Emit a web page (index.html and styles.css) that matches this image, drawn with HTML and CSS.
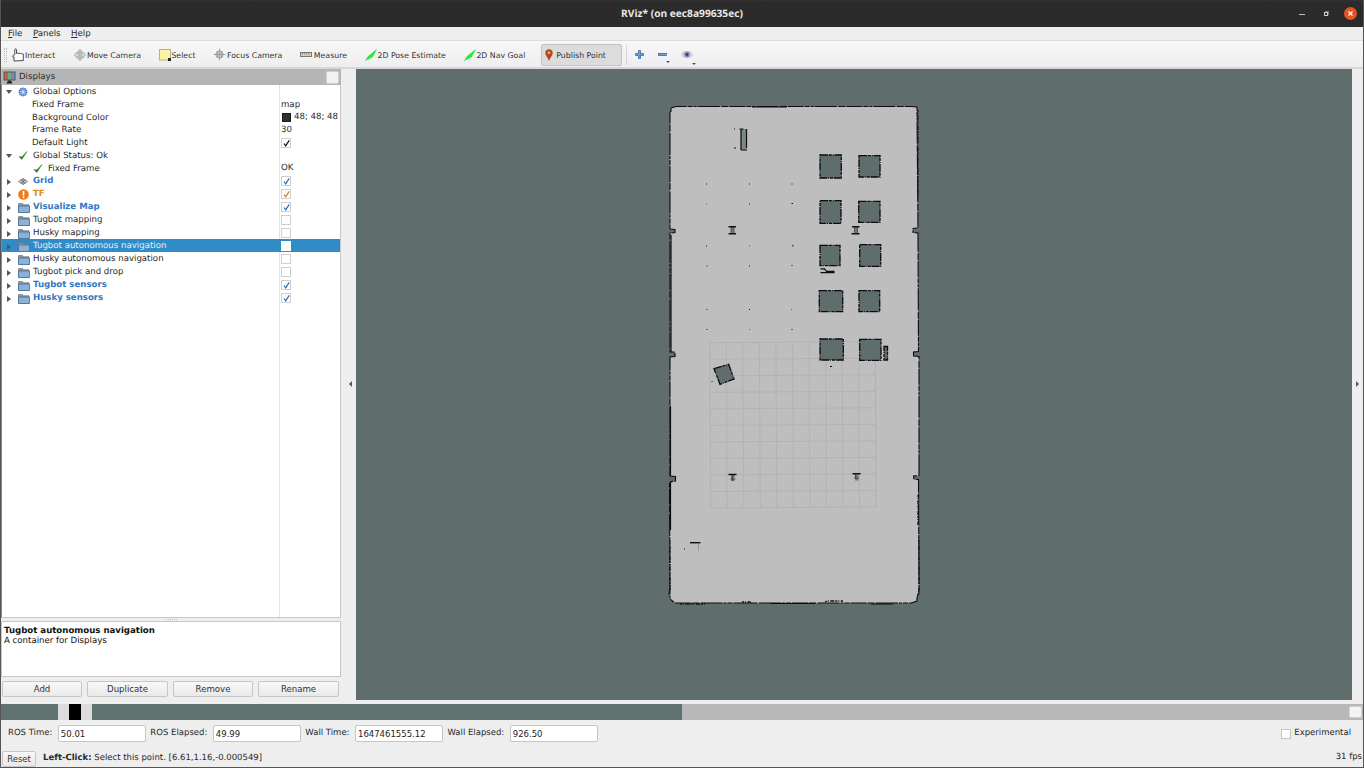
FILE: index.html
```html
<!DOCTYPE html>
<html lang="en">
<head>
<meta charset="utf-8">
<title>RViz</title>
<link rel="stylesheet" href="styles.css">
</head>
<body>
<svg class="defs" width="0" height="0" aria-hidden="true">
  <symbol id="folder" viewBox="0 0 12 11">
    <path d="M0.5 1.5h4l1 1.2h5.5v7.8h-10.500z" fill="#8f8f8f" stroke="#6f6f6f" stroke-width=".6"/>
    <path d="M0.500 4h11v6.500h-11z" fill="#8cb0d6" stroke="#3f6ea3" stroke-width=".8"/>
  </symbol>
  <symbol id="tick" viewBox="0 0 10 10">
    <path d="M1 5.500l2.800 3 5.200-8-5.200 5.500z" fill="#1f7a1f" stroke="#1f7a1f" stroke-width=".5"/>
  </symbol>
  <symbol id="checkmark" viewBox="0 0 9 9">
    <path d="M2 4.500l1.700 2.400 3.500-5.500" fill="none" stroke="currentColor" stroke-width="1.200"/>
  </symbol>
  <symbol id="arrow" viewBox="0 0 12 12">
    <path d="M.5 11.500L3 7.500 11.500.5 7.500 8z" fill="#1df51d" stroke="#22c43e" stroke-width=".4"/>
  </symbol>
  <symbol id="move" viewBox="0 0 12 12">
    <path d="M6 .3l1.800 1.900H6.800v1.600h2.200V2.900l2.700 3.100-2.700 3.100v-.9H6.800v1.600h1l-1.800 1.900-1.800-1.900h1V8.200H3v.9L.3 6 3 2.900v.9h2.200V2.200h-1z" fill="#d6d6d6" stroke="#8a8a8a" stroke-width=".6"/>
    <path d="M4 5h4M4 7h4M5 3.500v5M7 3.500v5" stroke="#9a9a9a" stroke-width=".5"/>
  </symbol>
  <symbol id="focus" viewBox="0 0 13 13">
    <circle cx="6.500" cy="6.500" r="3.700" fill="#d6d6d6" stroke="#8a8a8a" stroke-width=".7"/>
    <path d="M6.500.5v12M.5 6.500h12M4.700 3.500v6M8.300 3.500v6" stroke="#8a8a8a" stroke-width=".7"/>
  </symbol>
</svg>

<header class="titlebar">
  <span class="title">RViz* (on eec8a99635ec)</span>
  <div class="winctl">
    <span class="win-min"></span>
    <span class="win-max"></span>
    <svg class="win-close" width="13" height="13" viewBox="0 0 13 13"><circle cx="6.500" cy="6.500" r="6.500" fill="#e95420"/><path d="M4.500 4.500l4 4M8.500 4.500l-4 4" stroke="#fff" stroke-width="1.100"/></svg>
  </div>
</header>

<nav class="menubar">
  <span><u>F</u>ile</span>
  <span><u>P</u>anels</span>
  <span><u>H</u>elp</span>
</nav>

<div class="toolbar">
  <span class="grip"></span>
  <div class="tool tool-first">
    <svg width="13" height="14" viewBox="0 0 13 14"><path d="M2 13V9H.8c0-1.500.7-2.300 2-2.300V1.800c0-1.200 1.700-1.200 1.700 0v3.600l1.600-.4.400.5 1.500-.3.500.5 1.300-.2.500.5h1v6.500z" fill="#fff" stroke="#222" stroke-width=".8"/></svg>
    <span>Interact</span>
  </div>
  <div class="tool"><svg width="12" height="12"><use href="#move"/></svg><span>Move Camera</span></div>
  <div class="tool">
    <svg width="12" height="12" viewBox="0 0 12 12"><rect x=".5" y=".5" width="11" height="10.500" fill="#faf3a8" stroke="#b9b07a"/><rect x="9" y="9" width="3" height="3" fill="#222"/></svg>
    <span>Select</span>
  </div>
  <div class="tool"><svg width="13" height="13"><use href="#focus"/></svg><span>Focus Camera</span></div>
  <div class="tool tool-measure">
    <svg width="12" height="5" viewBox="0 0 12 5"><rect x=".5" y=".5" width="11" height="4" fill="#d8d2a0" stroke="#777"/><path d="M2.500 1v1.500M4.500 1v1.500M6.500 1v1.500M8.500 1v1.500" stroke="#666" stroke-width=".6"/></svg>
    <span>Measure</span>
  </div>
  <div class="tool"><svg width="12" height="12"><use href="#arrow"/></svg><span>2D Pose Estimate</span></div>
  <div class="tool"><svg width="12" height="12"><use href="#arrow"/></svg><span>2D Nav Goal</span></div>
  <div class="tool tool-active">
    <svg width="8" height="12" viewBox="0 0 8 12"><path d="M4 12C3 9 .3 6.500.3 4a3.700 3.700 0 0 1 7.400 0C7.700 6.500 5 9 4 12z" fill="#b5491f"/><circle cx="4" cy="3.800" r="1.300" fill="#f0b090"/></svg>
    <span>Publish Point</span>
  </div>
  <span class="tool-sep"></span>
  <div class="mini mini-plus">
    <svg width="9" height="9" viewBox="0 0 9 9"><path d="M3.500.5h2v3h3v2h-3v3h-2v-3h-3v-2h3z" fill="#6f9bd6" stroke="#2d5f9e" stroke-width=".7"/></svg>
  </div>
  <div class="mini mini-minus">
    <svg width="9" height="3" viewBox="0 0 9 3"><rect x=".4" y=".4" width="8.200" height="2.200" fill="#6f9bd6" stroke="#2d5f9e" stroke-width=".7"/></svg>
    <i class="drop"></i>
  </div>
  <div class="mini mini-eye">
    <svg width="12" height="9" viewBox="0 0 12 9"><ellipse cx="6" cy="4.500" rx="5.800" ry="3.800" fill="#d4d4d4"/><circle cx="6" cy="4.500" r="2.900" fill="#7f8cc0"/><circle cx="6" cy="4.500" r="1.300" fill="#2d3460"/></svg>
    <i class="drop"></i>
  </div>
</div>

<main class="main">
  <aside class="side">
    <div class="panel-head">
      <svg width="13" height="13" viewBox="0 0 13 13"><rect x=".5" y=".5" width="12" height="9" fill="#555"/><rect x="1.500" y="1.500" width="3.400" height="7" fill="#c85a5a"/><rect x="4.900" y="1.500" width="3.300" height="7" fill="#6faf6f"/><rect x="8.200" y="1.500" width="3.300" height="7" fill="#7a86c8"/><path d="M3.500 12.500h6l-1.500-3h-3z" fill="#222"/></svg>
      <span class="panel-name">Displays</span>
      <span class="panel-box"></span>
    </div>
    <div class="tree">
      <div class="row"><div class="cell lvl0"><i class="exp open"></i><svg class="ic" width="10" height="10" viewBox="0 0 10 10"><circle cx="5" cy="5" r="3.800" fill="#86a8dc" stroke="#3a6cc0" stroke-width="1.400" stroke-dasharray="1.300 .8"/><circle cx="5" cy="5" r="1.300" fill="#d5e2f5"/></svg><span>Global Options</span></div><div class="val"></div></div>
      <div class="row"><div class="cell lvl1"><span>Fixed Frame</span></div><div class="val">map</div></div>
      <div class="row"><div class="cell lvl1"><span>Background Color</span></div><div class="val"><i class="swatch"></i>48; 48; 48</div></div>
      <div class="row"><div class="cell lvl1"><span>Frame Rate</span></div><div class="val">30</div></div>
      <div class="row"><div class="cell lvl1"><span>Default Light</span></div><div class="val"><i class="cb cb-black"><svg width="9" height="9"><use href="#checkmark"/></svg></i></div></div>
      <div class="row"><div class="cell lvl0"><i class="exp open"></i><svg class="ic" width="10" height="10"><use href="#tick"/></svg><span>Global Status: Ok</span></div><div class="val"></div></div>
      <div class="row"><div class="cell lvl1b"><svg class="ic" width="10" height="10"><use href="#tick"/></svg><span>Fixed Frame</span></div><div class="val">OK</div></div>
      <div class="row"><div class="cell lvl0"><i class="exp"></i><svg class="ic" width="10" height="7" viewBox="0 0 10 7"><path d="M.5 3.500L5 .5l4.500 3L5 6.500zM5 .5v6M2.500 2l5 3M7.500 2l-5 3" fill="#ddd" stroke="#555" stroke-width=".7"/></svg><span class="on-blue">Grid</span></div><div class="val"><i class="cb cb-blue"><svg width="9" height="9"><use href="#checkmark"/></svg></i></div></div>
      <div class="row"><div class="cell lvl0"><i class="exp"></i><svg class="ic" width="11" height="11" viewBox="0 0 11 11"><circle cx="5.500" cy="5.500" r="5.300" fill="#ee7d1c"/><rect x="4.700" y="2" width="1.600" height="4.700" fill="#fff"/><rect x="4.700" y="7.500" width="1.600" height="1.600" fill="#fff"/></svg><span class="on-orange">TF</span></div><div class="val"><i class="cb cb-orange"><svg width="9" height="9"><use href="#checkmark"/></svg></i></div></div>
      <div class="row"><div class="cell lvl0"><i class="exp"></i><svg class="ic" width="12" height="11"><use href="#folder"/></svg><span class="on-blue">Visualize Map</span></div><div class="val"><i class="cb cb-blue"><svg width="9" height="9"><use href="#checkmark"/></svg></i></div></div>
      <div class="row"><div class="cell lvl0"><i class="exp"></i><svg class="ic" width="12" height="11"><use href="#folder"/></svg><span>Tugbot mapping</span></div><div class="val"><i class="cb"></i></div></div>
      <div class="row"><div class="cell lvl0"><i class="exp"></i><svg class="ic" width="12" height="11"><use href="#folder"/></svg><span>Husky mapping</span></div><div class="val"><i class="cb"></i></div></div>
      <div class="row row-sel"><div class="cell lvl0"><i class="exp"></i><svg class="ic" width="12" height="11"><use href="#folder"/></svg><span>Tugbot autonomous navigation</span></div><div class="val"><i class="cb cb-sel"></i></div></div>
      <div class="row"><div class="cell lvl0"><i class="exp"></i><svg class="ic" width="12" height="11"><use href="#folder"/></svg><span>Husky autonomous navigation</span></div><div class="val"><i class="cb"></i></div></div>
      <div class="row"><div class="cell lvl0"><i class="exp"></i><svg class="ic" width="12" height="11"><use href="#folder"/></svg><span>Tugbot pick and drop</span></div><div class="val"><i class="cb"></i></div></div>
      <div class="row"><div class="cell lvl0"><i class="exp"></i><svg class="ic" width="12" height="11"><use href="#folder"/></svg><span class="on-blue">Tugbot sensors</span></div><div class="val"><i class="cb cb-blue"><svg width="9" height="9"><use href="#checkmark"/></svg></i></div></div>
      <div class="row"><div class="cell lvl0"><i class="exp"></i><svg class="ic" width="12" height="11"><use href="#folder"/></svg><span class="on-blue">Husky sensors</span></div><div class="val"><i class="cb cb-blue"><svg width="9" height="9"><use href="#checkmark"/></svg></i></div></div>
      <div class="tree-fill"><div class="tree-line"></div></div>
    </div>
    <div class="split"><i></i></div>
    <div class="desc">
      <b>Tugbot autonomous navigation</b>
      <span>A container for Displays</span>
    </div>
    <div class="buttons">
      <button class="btn btn-add">Add</button>
      <button class="btn btn-dup">Duplicate</button>
      <button class="btn btn-rem">Remove</button>
      <button class="btn btn-ren">Rename</button>
    </div>
  </aside>
  <div class="handle"><i class="tri-left"></i></div>
  <section class="view">
    <svg class="map" viewBox="356 69 996 631" width="996" height="631">
      <polygon class="floor" points="671,108 676,106.500 912,106.500 917,107 917,111 918,228 913,228.500 913,232.500 918,233 918.500,351.500 913.500,352 913.500,356 919,356.500 919,475.500 913.500,476 914,479 918.500,479.500 919,590 917,598 917,601 911,603 675,603 670,599 669.500,482 675.500,481 675.500,476.500 670,476 670,357 675,356.500 675,352 670,352 670,233 675,232.500 675,229.500 670,229 670,112 671,111.500"/>
      <polygon class="wall" points="671,108 676,106.500 912,106.500 917,107 917,111 918,228 913,228.500 913,232.500 918,233 918.500,351.500 913.500,352 913.500,356 919,356.500 919,475.500 913.500,476 914,479 918.500,479.500 919,590 917,598 917,601 911,603 675,603 670,599 669.500,482 675.500,481 675.500,476.500 670,476 670,357 675,356.500 675,352 670,352 670,233 675,232.500 675,229.500 670,229 670,112 671,111.500"/>
      <path class="wall-solid" d="M752 107H787M670.500 406V476M670.500 482V530M671 235V352M871 604H893M770 603.500H815"/>
      <path class="wall-rough" d="M680 604h26M742 602h8l1 2M825 602l2-1h16M918 495v30M919 540v55M670 540v50M670 585l-1 10M918 110v90"/>
      <path class="grid" d="M709.700 342.700L710.700 508M726.300 342.600L727.200 507.900M742.800 342.500L743.800 507.800M759.400 342.400L760.300 507.700M775.900 342.300L776.800 507.600M792.500 342.200L793.400 507.500M809.100 342.100L809.900 507.400M825.600 342L826.400 507.300M842.200 341.900L842.900 507.200M858.700 341.800L859.500 507.100M875.300 341.700L876 507"/>
      <path class="grid" d="M709.700 342.700L875.300 341.700M709.800 359.200L875.400 358.200M709.900 375.800L875.500 374.800M710 392.300L875.600 391.300M710.100 408.800L875.700 407.800M710.200 425.400L875.700 424.400M710.300 441.900L875.800 440.900M710.400 458.400L875.900 457.400M710.500 474.900L876 473.900M710.600 491.500L876 490.500M710.700 508L876 507"/>
      <rect class="pillar" x="820" y="155" width="21.300" height="23"/>
      <rect class="pillar" x="859" y="155.700" width="21" height="21.300"/>
      <rect class="pillar" x="820" y="200.700" width="21" height="22.600"/>
      <rect class="pillar" x="858.700" y="201.300" width="21.300" height="21"/>
      <rect class="pillar" x="820" y="245.300" width="20" height="20.400"/>
      <rect class="pillar" x="859.700" y="244.700" width="21" height="21.600"/>
      <rect class="pillar" x="819.300" y="290.700" width="23.400" height="21"/>
      <rect class="pillar" x="859" y="290.700" width="20.700" height="21"/>
      <rect class="pillar" x="820" y="339" width="23.300" height="21"/>
      <rect class="pillar" x="859.700" y="339.300" width="21.300" height="21"/>
      <rect class="pillar" x="884" y="346.500" width="3.500" height="13.500"/>
      <polygon class="pillar" points="714,368.700 728.700,364.300 734,379 720,384.300"/>
      <path class="wall-solid" d="M820.500 268.800h4l2 2.500h8M820.500 272.600h14"/>
      <path class="stem" d="M731 227h3v6.500h-3zM854.500 227h3v6.500h-3zM731 475h3.500v6h-3.500zM855 474.500h3.500v6h-3.500z"/>
      <path class="ibeam" d="M728.500 226.700h7.500M728.500 233.800h7.500M852 226.700h7.500M851.500 233.800h8M728.500 474.500h8M852.500 473.800h8"/>
      <path class="ibeam-thin" d="M731 227v6.500M734 227v6.500M854.500 227v6.500M857.500 227v6.500M732.500 475v6M730.500 479h5M855.500 474v4M854 478h5"/>
      <path class="ibeam" d="M690 542.700h10.500"/>
      <path class="obj" d="M741 129v21h5.500V129z"/>
      <path class="wall-solid" d="M739.500 129h4M741 129v21M746.500 129v19M741 150h6"/>
      <path class="faint" d="M698.500 544v7"/>
      <path class="dots" d="M706 184h1M749 184h1M791.500 184h1M706 204h.6M749 204h1M791.500 203.500h1.500M706 246h1M749 246h.6M792 245.800h1.500M706.500 266h1M749 266h1M791.500 265.500h1M706.500 309.500h1M749 309.500h1M791.500 309.500h.6M706.500 329.500h1M749.500 329.500h.6M791.500 329.500h1M734 129h1M734 148h2M684 549h1M711.500 381.500h1M830 366.500h2"/>
    </svg>
  </section>
  <div class="handle-right"><i class="tri-right"></i></div>
</main>

<div class="timeline">
  <div class="tl-played">
    <span class="tl-window"><i class="tl-head"></i></span>
  </div>
  <div class="tl-rest"><span class="tl-thumb"></span></div>
</div>

<div class="timepanel">
  <label class="tf">ROS Time:<input class="inp" value="50.01"></label>
  <label class="tf">ROS Elapsed:<input class="inp" value="49.99"></label>
  <label class="tf">Wall Time:<input class="inp" value="1647461555.12"></label>
  <label class="tf">Wall Elapsed:<input class="inp" value="926.50"></label>
  <label class="exper"><i class="cb cb-exp"></i>Experimental</label>
</div>

<footer class="status">
  <button class="btn btn-reset">Reset</button>
  <span class="hint"><b>Left-Click:</b> Select this point. [6.61,1.16,-0.000549]</span>
  <span class="fps">31 fps</span>
</footer>
</body>
</html>
```
FILE: styles.css
```css
* { box-sizing: border-box; }
html, body { margin: 0; padding: 0; }
body {
  width: 1364px; height: 768px; overflow: hidden;
  display: flex; flex-direction: column;
  background: #eeeeee; color: #2a2a2a;
  font-family: "DejaVu Sans", sans-serif; font-size: 8.6px; line-height: 1;
  text-rendering: geometricPrecision;
  border-left: 1px solid #555; border-right: 1px solid #555; border-bottom: 1px solid #555;
}
.defs { position: absolute; }

.titlebar {
  flex: 0 0 27px; margin: 0 -1px; position: relative;
  display: flex; align-items: center; justify-content: center;
  background: linear-gradient(#333333, #2b2b2b 10%, #2b2b2b);
}
.title { color: #e8e8e8; font-family: "Open Sans", sans-serif; font-weight: 700; font-size: 10.200px; }
.winctl { position: absolute; right: 7px; top: 7px; display: flex; align-items: center; }
.win-min { width: 6px; height: 1px; background: #bbb; margin-right: 19px; margin-top: 2px; }
.win-max { width: 4px; height: 4px; border: 1px solid #ccc; margin-right: 16px; box-shadow: 1px -1px 0 #777; }

.menubar {
  flex: 0 0 14px; display: flex; align-items: center; gap: 10.500px; padding: 2px 0 0 7px;
  border-bottom: 1px solid #dcdcdc; background: #eeeeee;
}

.toolbar {
  flex: 0 0 28px; display: flex; align-items: center; padding: 1px 0 0 3px;
  background: linear-gradient(#f7f7f7, #eeeeee);
  border-bottom: 2px solid #d6d6d6; font-size: 7.800px;
}
.grip { width: 3px; height: 14px; border-left: 1px dotted #bbb; border-right: 1px dotted #bbb; margin-right: 5px; }
.tool { display: flex; align-items: center; gap: .5px; margin-right: 18px; color: #333; }
.tool span { margin-top: 2px; }
.tool-first { gap: 0; margin-right: 19px; }
.tool-measure { gap: 1.500px; }
.tool-active {
  width: 81px; height: 22px; margin: 0 0 0 -2px; padding-left: 3px; gap: 3px;
  background: #dcdcdc; border: 1px solid #c2c2c2; border-radius: 2px;
}
.tool-sep { width: 1px; height: 20px; background: #d4d4d4; margin: 0 8.500px 0 3.500px; }
.mini { position: relative; display: flex; align-items: center; }
.mini-plus { margin-right: 14px; }
.mini-minus { margin-right: 14px; }
.drop { position: absolute; right: -3px; bottom: -6px; border: 2px solid transparent; border-top: 2px solid #555; border-bottom: 0; }
.mini-minus .drop { bottom: -7px; }

.main { flex: 0 0 631px; display: flex; min-height: 0; }
.side { width: 340px; display: flex; flex-direction: column; }
.panel-head {
  flex: 0 0 16px; display: flex; align-items: center; padding: 0 2px 0 2px; gap: 3px;
  background: #b5b5b5;
}
.panel-name { flex: 1; margin-top: 1px; }
.panel-box { width: 13px; height: 13px; background: #f2f2f2; border: 1px solid #d0d0d0; border-radius: 2px; }

.tree {
  flex: 0 0 533px; background: #fff; display: flex; flex-direction: column;
  border-right: 1px solid #c8c8c8; border-left: 1px solid #888; border-bottom: 1px solid #c8c8c8;
}
.row { flex: 0 0 12.750px; display: flex; align-items: center; }
.cell { flex: 0 0 277px; height: 100%; padding-top: 2px; display: flex; align-items: center; white-space: nowrap; }
.lvl0 { display: grid; grid-template-columns: 11px 15px auto; align-items: center; padding-left: 5px; }
.lvl1 { padding-left: 30px; }
.lvl1b { padding-left: 31px; }
.lvl1b .ic { margin-right: 5px; }
.exp { width: 0; height: 0; border-style: solid; border-width: 3px 0 3px 4px; border-color: transparent transparent transparent #555; }
.exp.open { border-width: 4px 3px 0 3px; margin-left: -1px; border-color: #555 transparent transparent transparent; }
.ic { flex: none; }
.val { flex: 1; height: 100%; padding: 1.500px 0 0 1px; display: flex; align-items: center; border-left: 1px solid #e2e2e2; white-space: nowrap; }
.swatch { width: 9px; height: 9px; background: #303030; border: 1px solid #1c1c1c; margin: 0 3px 0 1px; }
.cb { display: inline-flex; width: 10px; height: 10px; background: #fff; border: 1px solid #cfcfcf; align-items: center; justify-content: center; }
.cb svg { flex: none; }
.cb-black { color: #111; }
.cb-blue { color: #2f6fb4; }
.cb-orange { color: #c98516; }
.on-blue { color: #2f78c4; font-weight: 700; }
.on-orange { color: #e08a18; font-weight: 700; }
.row-sel { background: #308cc6; color: #e3eef6; }
.row-sel .val { border-left-color: #308cc6; }
.cb-sel { border-color: #fff; }
.tree-fill { flex: 1; position: relative; }
.tree-line { position: absolute; top: 0; bottom: 0; left: 277px; width: 1px; background: #e2e2e2; }

.split { flex: 0 0 3px; display: flex; justify-content: center; align-items: center; }
.split i { width: 11px; height: 1px; border-top: 1px dotted #bdbdbd; }
.desc {
  flex: 0 0 56px; display: flex; flex-direction: column; gap: 1px; padding: 5px 0 0 2px;
  background: #fff; border: 1px solid #c8c8c8; color: #111; line-height: 9px;
}
.buttons { flex: none; display: flex; padding: 4px 0 0 1px; }
.btn {
  height: 16px; padding: 0; font: inherit; color: #333; cursor: default;
  background: linear-gradient(#f8f8f8, #e9e9e9); border: 1px solid #c6c6c6; border-radius: 2px;
}
.btn-add { width: 80px; margin-right: 5px; }
.btn-dup { width: 81px; margin-right: 5px; }
.btn-rem { width: 80px; margin-right: 5px; }
.btn-ren { width: 81px; }

.handle { width: 15px; display: flex; align-items: center; justify-content: center; padding-left: 4px; padding-bottom: 2px; }
.tri-left { border-style: solid; border-width: 3px 3px 3px 0; border-color: transparent #555 transparent transparent; }
.view { width: 996px; height: 631px; background: #5f6e6c; }
.map { display: block; }
.handle-right { flex: 1; display: flex; align-items: center; justify-content: center; padding-bottom: 2px; }
.tri-right { border-style: solid; border-width: 3px 0 3px 3px; border-color: transparent transparent transparent #555; }

.floor { fill: #bebebe; }
.wall { fill: none; stroke: #0c0c0c; stroke-width: 1.100; stroke-dasharray: 16 1 5 1 3 1 22 1.500 7 1; }
.wall-solid { fill: none; stroke: #0c0c0c; stroke-width: 1.200; }
.wall-rough { fill: none; stroke: #161616; stroke-width: 1.300; stroke-dasharray: 2 1 1 1.500 4 1; }
.grid { fill: none; stroke: #b0b0b0; stroke-width: .8; }
.pillar { fill: #5f6e6c; stroke: #0c0c0c; stroke-width: 1.300; stroke-dasharray: 8 .8 3 1 1 .8; }
.ibeam { fill: none; stroke: #111; stroke-width: 1.400; }
.ibeam-thin { fill: none; stroke: #333; stroke-width: .7; }
.stem { fill: #6f7e7c; }
.obj { fill: #7c8886; }
.faint { fill: none; stroke: #8e9a98; stroke-width: 1; }
.dots { fill: none; stroke: #161616; stroke-width: 1; }

.timeline { flex: 0 0 16px; margin-top: 4px; display: flex; }
.tl-played { width: 681px; background: #607270; padding-left: 57px; }
.tl-window { display: flex; justify-content: center; width: 34px; height: 100%; background: #dcdcdc; }
.tl-head { width: 12px; height: 100%; background: #000; }
.tl-rest { flex: 1; background: #b8b8b8; display: flex; justify-content: flex-end; align-items: center; padding-right: 1px; }
.tl-thumb { width: 13px; height: 12px; background: #f4f4f4; border: 1px solid #d0d0d0; border-radius: 2px; }

.timepanel { flex: 0 0 25px; display: flex; align-items: center; padding: 2px 0 0 7px; font-size: 8.500px; }
.tf { display: flex; align-items: center; gap: 5.500px; margin-right: 4.500px; white-space: nowrap; }
.inp { width: 88px; height: 17px; padding: 0 2px; border: 1px solid #c6c6c6; border-radius: 2px; background: #fff; font: inherit; color: #222; outline: none; }
.exper { margin-left: auto; margin-right: 12px; display: flex; align-items: center; gap: 3px; }
.cb-exp { border-color: #c4c4c4; }

.status { flex: 1; display: flex; align-items: center; padding-left: 1px; font-size: 8.500px; }
.btn-reset { width: 34px; height: 16px; margin-right: 7px; margin-top: 6px; }
.hint { margin-top: 4px; }
.fps { margin-left: auto; margin-right: 1px; margin-top: 2px; }
```
